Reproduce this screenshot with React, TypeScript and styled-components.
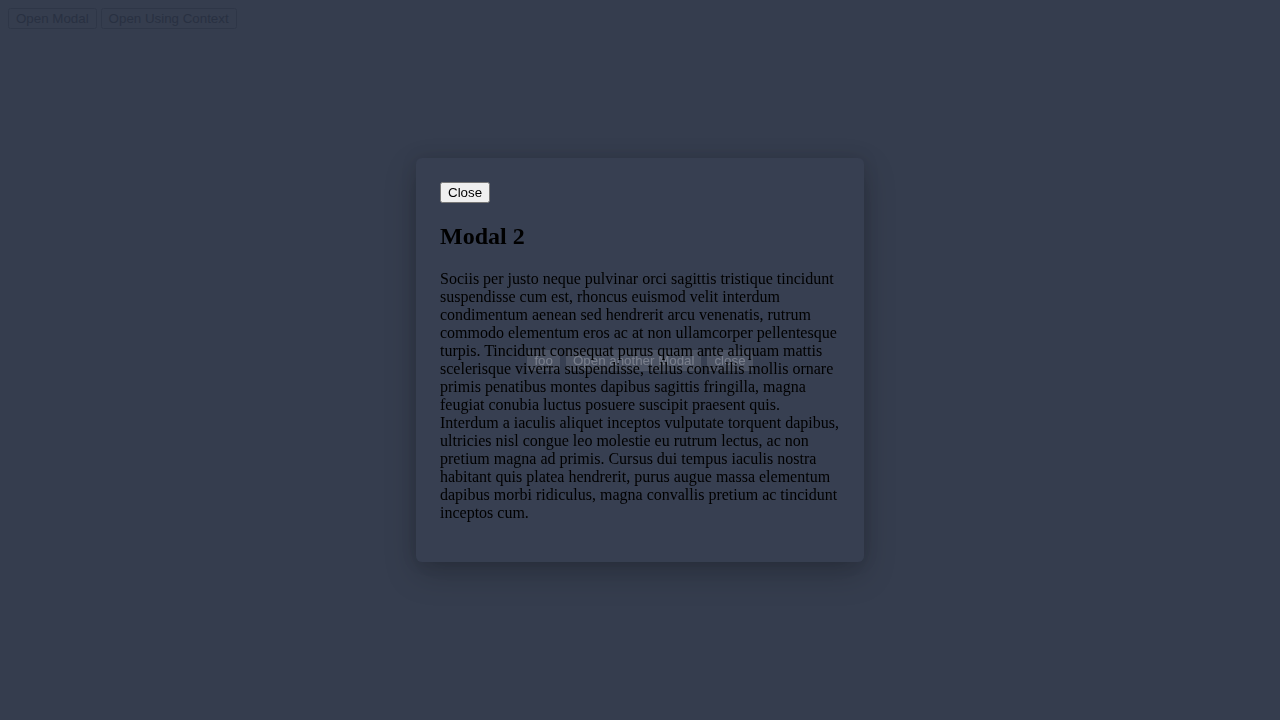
import React from "react";
import styled, { createGlobalStyle } from "styled-components";

const GlobalStyle = createGlobalStyle`
  html, body { background: #ffffff; }
  body {
    margin: 8px;
    font-family: "Liberation Serif", "Times New Roman", serif;
    color: #000;
  }
`;

const Toolbar = styled.div`
  display: flex;
  gap: 4px;
  align-items: flex-start;
`;

const NativeButton = styled.button`
  font-family: "Liberation Sans", Arial, sans-serif;
  font-size: 13.333px;
`;

const Overlay = styled.div`
  position: fixed;
  inset: 0;
  background: rgba(42, 51, 68, 0.95);
`;

const Layer = styled.div`
  position: fixed;
  inset: 0;
  display: flex;
  align-items: center;
  justify-content: center;
`;

const GhostRow = styled.div`
  display: flex;
  gap: 6px;
  align-items: center;
`;

const GhostButton = styled.button`
  font-family: "Liberation Sans", Arial, sans-serif;
  font-size: 13.333px;
  line-height: 15px;
  padding: 2px 6px;
  border: 1px solid transparent;
  border-radius: 2px;
  background: rgba(255, 255, 255, 0.14);
  color: rgba(255, 255, 255, 0.36);
`;

const Panel = styled.div`
  box-sizing: border-box;
  width: 448px;
  padding: 24px;
  border-radius: 6px;
  background: rgba(62, 70, 88, 0.28);
  box-shadow: 0 12px 32px rgba(0, 0, 0, 0.22), 0 0 16px rgba(0, 0, 0, 0.12);
  color: #000;
`;

const Title = styled.h2`
  font-size: 24px;
  margin: 20px 0;
  font-weight: bold;
`;

const Body = styled.p`
  font-size: 16px;
  margin: 16px 0;
`;

const TEXT =
  "Sociis per justo neque pulvinar orci sagittis tristique tincidunt suspendisse cum est, rhoncus euismod velit interdum condimentum aenean sed hendrerit arcu venenatis, rutrum commodo elementum eros ac at non ullamcorper pellentesque turpis. Tincidunt consequat purus quam ante aliquam mattis scelerisque viverra suspendisse, tellus convallis mollis ornare primis penatibus montes dapibus sagittis fringilla, magna feugiat conubia luctus posuere suscipit praesent quis. Interdum a iaculis aliquet inceptos vulputate torquent dapibus, ultricies nisl congue leo molestie eu rutrum lectus, ac non pretium magna ad primis. Cursus dui tempus iaculis nostra habitant quis platea hendrerit, purus augue massa elementum dapibus morbi ridiculus, magna convallis pretium ac tincidunt inceptos cum.";

export default function App() {
  return (
    <>
      <GlobalStyle />
      <Toolbar>
        <NativeButton>Open Modal</NativeButton>
        <NativeButton>Open Using Context</NativeButton>
      </Toolbar>
      <Overlay />
      <Layer>
        <GhostRow>
          <GhostButton>foo</GhostButton>
          <GhostButton>Open another Modal</GhostButton>
          <GhostButton>close</GhostButton>
        </GhostRow>
      </Layer>
      <Layer>
        <Panel>
          <NativeButton>Close</NativeButton>
          <Title>Modal 2</Title>
          <Body>{TEXT}</Body>
        </Panel>
      </Layer>
    </>
  );
}
